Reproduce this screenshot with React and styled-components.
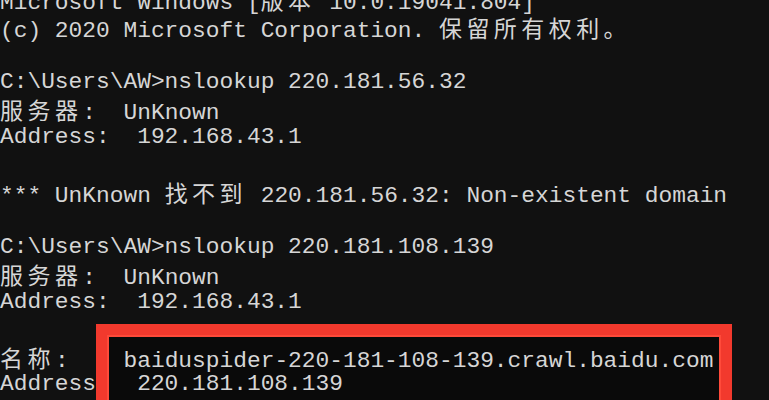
import React from "react";
import styled, { createGlobalStyle } from "styled-components";

const Global = createGlobalStyle`
  html, body { margin: 0; padding: 0; background: #111111; }
`;

const COL = 13.72;
const ROW = 27.5;

const Screen = styled.div`
  position: relative;
  width: 769px;
  height: 400px;
  overflow: hidden;
  background: #111111;
`;

const Console = styled.div`
  position: relative;
  z-index: 1;
  display: flex;
  flex-direction: column;
  margin-top: -14px;
  color: #d6d6d6;
  font-family: "Liberation Mono", "Noto Sans CJK SC", monospace;
  font-size: 22.86px;
`;

const Line = styled.div`
  height: ${ROW}px;
  line-height: ${ROW}px;
  white-space: pre;
`;

const Wide = styled.span`
  font-family: "Noto Sans CJK SC", sans-serif;
  font-size: 23px;
  letter-spacing: ${2 * COL - 23}px;
  font-weight: 400;
`;

const Backdrop = styled.div`
  position: absolute;
  z-index: 0;
  left: 107px;
  top: 335px;
  width: 614px;
  height: 80px;
  background: #0a0a0a;
`;

const Highlight = styled.div`
  position: absolute;
  z-index: 2;
  left: 96px;
  top: 324px;
  width: 636px;
  height: 100px;
  box-sizing: border-box;
  border: 11px solid #f2392d;
  box-shadow: inset 0 0 0 2px #ff4a3a;
`;

const CJK = /[\u3000-\u303f\u4e00-\u9fff\uff00-\uffef]+/g;

function Text({ children }) {
  const s = children;
  const parts = [];
  let last = 0;
  let m;
  CJK.lastIndex = 0;
  while ((m = CJK.exec(s))) {
    if (m.index > last) parts.push(s.slice(last, m.index));
    parts.push(<Wide key={m.index}>{m[0]}</Wide>);
    last = m.index + m[0].length;
  }
  if (last < s.length) parts.push(s.slice(last));
  return <Line>{parts.length ? parts : " "}</Line>;
}

const lines = [
  "Microsoft Windows [版本 10.0.19041.804]",
  "(c) 2020 Microsoft Corporation. 保留所有权利。",
  "",
  "C:\\Users\\AW>nslookup 220.181.56.32",
  "服务器:  UnKnown",
  "Address:  192.168.43.1",
  "",
  "*** UnKnown 找不到 220.181.56.32: Non-existent domain",
  "",
  "C:\\Users\\AW>nslookup 220.181.108.139",
  "服务器:  UnKnown",
  "Address:  192.168.43.1",
  "",
  "名称:    baiduspider-220-181-108-139.crawl.baidu.com",
  "Address:  220.181.108.139",
];

export default function App() {
  return (
    <>
      <Global />
      <Screen>
        <Backdrop />
        <Console>
          {lines.map((l, i) => (
            <Text key={i}>{l}</Text>
          ))}
        </Console>
        <Highlight />
      </Screen>
    </>
  );
}
